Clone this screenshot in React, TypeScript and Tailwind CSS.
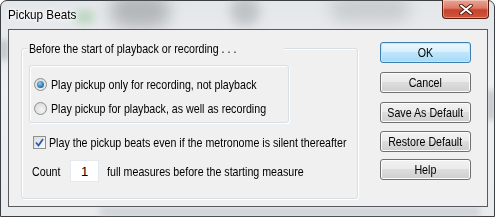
import React from 'react';

const font = { fontFamily: '"Liberation Sans", Arial, sans-serif' };

// the dialog's text is drawn in a narrow face; Arial squeezed to about 82% width
const T: React.FC<{ children: React.ReactNode; center?: boolean; className?: string }> = ({ children, center, className }) => (
  <span className={`inline-block whitespace-nowrap scale-x-[0.82] ${center ? 'origin-center' : 'origin-left'} ${className ?? ''}`}>
    {children}
  </span>
);

const Btn: React.FC<{ label: string; primary?: boolean; className?: string }> = ({ label, primary, className }) => (
  <button
    className={`w-[91px] h-[21px] rounded-[3px] border text-[13px] leading-none text-black flex items-center justify-center ${
      primary
        ? 'border-[#3c7fb1] bg-[linear-gradient(#eaf6fd_0%,#d9f0fc_45%,#bee6fd_50%,#a7d9f5_100%)] shadow-[inset_0_0_0_1px_#c4e7fa]'
        : 'border-[#707070] bg-[linear-gradient(#f2f2f2_0%,#ebebeb_45%,#dddddd_50%,#cfcfcf_100%)] shadow-[inset_0_0_0_1px_#fcfcfc]'
    } ${className ?? ''}`}
  >
    <T center>{label}</T>
  </button>
);

const Radio: React.FC<{ checked?: boolean }> = ({ checked }) => (
  <span className="w-[13px] h-[13px] rounded-full border border-[#8e8f8f] bg-[radial-gradient(circle_at_60%_60%,#f4f4f4,#d4d4d4)] flex items-center justify-center shrink-0">
    {checked && <span className="w-[7px] h-[7px] rounded-full bg-[radial-gradient(circle_at_40%_35%,#8fd0f3,#1c6ca8_70%,#0f4e86)]" />}
  </span>
);

export default function App() {
  return (
    <div className="w-[495px] h-[217px] relative overflow-hidden text-black" style={font}>
      {/* aero glass frame */}
      <div className="absolute inset-0 rounded-t-[7px] border border-[#3a3f44] bg-[linear-gradient(180deg,#e4e7ea_0%,#eef0f2_40%,#e9ebed_100%)]" />
      <div className="absolute left-[110px] top-[-6px] w-[60px] h-[34px] rounded-full bg-[#6b6f72] opacity-40 blur-[8px]" />
      <div className="absolute left-[230px] top-[-4px] w-[30px] h-[30px] rounded-full bg-[#7a7e82] opacity-35 blur-[6px]" />
      <div className="absolute left-[330px] top-[-4px] w-[80px] h-[26px] rounded-full bg-[#8a8e91] opacity-30 blur-[8px]" />
      <div className="absolute left-[75px] top-[10px] w-[20px] h-[14px] rounded-full bg-[#5fae5f] opacity-30 blur-[4px]" />
      <div className="absolute left-[0px] top-[40px] w-[8px] h-[20px] bg-[#7e8286] opacity-40 blur-[3px]" />
      <div className="absolute left-[487px] top-[90px] w-[8px] h-[30px] bg-[#7e8286] opacity-40 blur-[3px]" />
      <div className="absolute left-[100px] top-[207px] w-[380px] h-[10px] bg-[#9a9ea2] opacity-30 blur-[3px]" />

      <div className="relative flex flex-col h-full">
        {/* title bar */}
        <div className="h-[29px] flex items-start justify-between">
          <span className="pl-[8px] pt-[8px] text-[13px] leading-[14px] [text-shadow:0_0_6px_#ffffff,0_0_4px_#ffffff]">
            <span className="inline-block whitespace-nowrap scale-x-[0.9] origin-left">Pickup Beats</span>
          </span>
          <div className="mr-[6px] w-[47px] h-[19px] rounded-b-[4px] border border-t-0 border-[#5b1c10] bg-[linear-gradient(#e9a596_0%,#dc7a66_45%,#c7432e_55%,#d0553c_100%)] shadow-[inset_0_0_0_1px_rgba(255,255,255,0.35)] flex items-center justify-center">
            <svg width="14" height="11" viewBox="0 0 14 11">
              <path d="M2 1.5 L12 9.5 M12 1.5 L2 9.5" stroke="#4a1208" strokeWidth="3.6" strokeLinecap="round" />
              <path d="M2 1.5 L12 9.5 M12 1.5 L2 9.5" stroke="#ffffff" strokeWidth="2" strokeLinecap="round" />
            </svg>
          </div>
        </div>

        {/* client area */}
        <div className="ml-[8px] w-[480px] h-[178px] border border-[#575b5f] bg-[#f0f0f0] flex text-[13px] leading-[15px]">
          {/* group box */}
          <div className="relative ml-[12px] mt-[18px] w-[337px] h-[151px] rounded-[3px] border border-[#d5dfe5] shadow-[inset_1px_1px_0_#ffffff,1px_1px_0_#ffffff]">
            <span className="absolute left-[5px] top-[-8px] px-[2px] bg-[#f0f0f0]">
              <T>Before the start of playback or recording . . .</T>
            </span>

            <div className="ml-[7px] mt-[16px] w-[260px] h-[58px] rounded-[3px] border border-[#d5dfe5] shadow-[inset_1px_1px_0_#ffffff,1px_1px_0_#ffffff] pt-[6px] pl-[4px] flex flex-col">
              <div className="h-[24px] flex items-center gap-[4px]">
                <Radio checked />
                <T>Play pickup only for recording, not playback</T>
              </div>
              <div className="h-[24px] flex items-center gap-[4px]">
                <Radio />
                <T>Play pickup for playback, as well as recording</T>
              </div>
            </div>

            <div className="ml-[11px] mt-[9px] h-[20px] flex items-center gap-[3px]">
              <span className="w-[13px] h-[13px] border border-[#8e8f8f] bg-[linear-gradient(135deg,#dcdcdc,#fbfbfb)] flex items-center justify-center shrink-0">
                <svg width="9" height="9" viewBox="0 0 9 9">
                  <path d="M1 4.5 L3.5 7.5 L8 1" fill="none" stroke="#2a5ea8" strokeWidth="1.8" />
                </svg>
              </span>
              <T>Play the pickup beats even if the metronome is silent thereafter</T>
            </div>

            <div className="ml-[10px] mt-[8px] h-[22px] flex items-center">
              <span className="w-[38px]"><T>Count</T></span>
              <span className="w-[29px] h-[22px] border border-[#e3e9ef] bg-white flex items-center justify-center">1</span>
              <span className="ml-[8px]"><T>full measures before the starting measure</T></span>
            </div>
          </div>

          {/* buttons */}
          <div className="ml-[22px] mt-[12px] flex flex-col">
            <Btn label="OK" primary />
            <Btn label="Cancel" className="mt-[9px]" />
            <Btn label="Save As Default" className="mt-[9px]" />
            <Btn label="Restore Default" className="mt-[8px]" />
            <Btn label="Help" className="mt-[7px]" />
          </div>
        </div>
      </div>
    </div>
  );
}
